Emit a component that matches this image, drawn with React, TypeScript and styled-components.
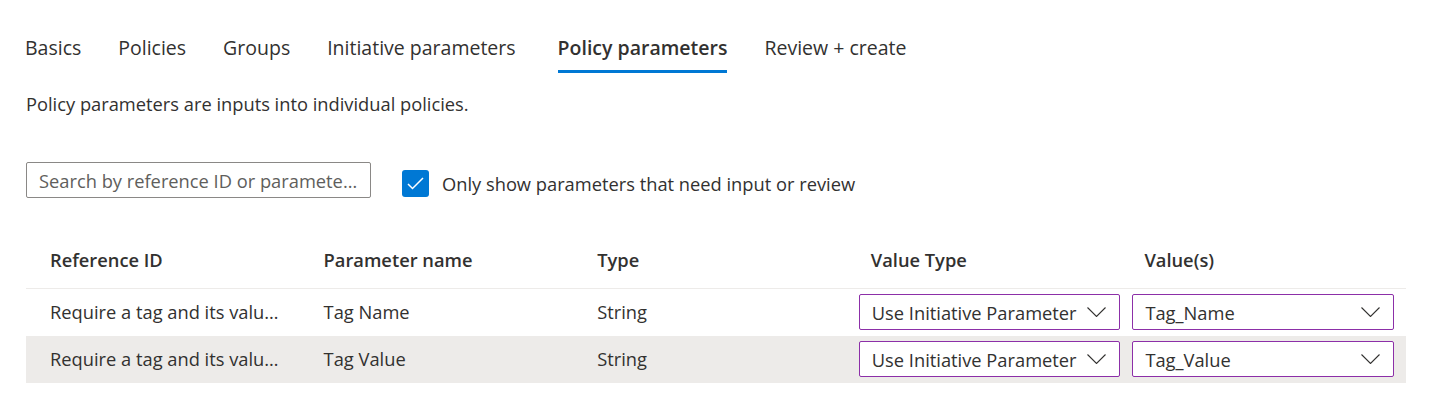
import React from "react";
import styled, { createGlobalStyle } from "styled-components";

const GlobalStyle = createGlobalStyle`
  html, body {
    margin: 0;
    padding: 0;
    background: #ffffff;
  }
  body {
    font-family: "Open Sans", "Noto Sans", "Liberation Sans", sans-serif;
    color: #323130;
    -webkit-font-smoothing: antialiased;
  }
  * { box-sizing: border-box; }
`;

const Page = styled.div`
  padding: 34px 0 0 26px;
  width: 1435px;
  height: 403px;
  overflow: hidden;
`;

const TabBar = styled.nav`
  display: flex;
  gap: 37px;
  margin-left: -1px;
`;

const Tab = styled.div<{ $active?: boolean }>`
  position: relative;
  font-size: 19.5px;
  line-height: 28px;
  padding-bottom: 11px;
  margin-left: ${(p) => (p.$active ? "5px" : "0")};
  font-weight: ${(p) => (p.$active ? 600 : 400)};
  color: #323130;
  white-space: nowrap;
  &::after {
    content: "";
    position: absolute;
    left: 0;
    right: 0;
    bottom: 0;
    height: 3px;
    background: ${(p) => (p.$active ? "#0078d4" : "transparent")};
  }
`;

const Description = styled.p`
  margin: 19px 0 0;
  font-size: 18.3px;
  line-height: 24px;
`;

const Toolbar = styled.div`
  display: flex;
  align-items: flex-start;
  gap: 31px;
  margin-top: 46px;
`;

const SearchBox = styled.input`
  width: 345px;
  height: 36px;
  border: 1px solid #8a8886;
  border-radius: 2px;
  padding: 0 12px;
  font-family: inherit;
  font-size: 18.3px;
  color: #323130;
  outline: none;
  &::placeholder {
    color: #605e5c;
    opacity: 1;
  }
`;

const CheckRow = styled.label`
  display: flex;
  align-items: center;
  gap: 13px;
  margin-top: 8px;
  font-size: 18.3px;
  line-height: 26px;
`;

const CheckBox = styled.span`
  width: 27px;
  height: 27px;
  border-radius: 3px;
  background: #0078d4;
  display: flex;
  align-items: center;
  justify-content: center;
  flex-shrink: 0;
`;

const Table = styled.div`
  margin-top: 38px;
  width: 1380px;
`;

const Row = styled.div<{ $header?: boolean; $shaded?: boolean }>`
  display: grid;
  grid-template-columns: repeat(5, 1fr);
  padding-right: 12px;
  align-items: center;
  height: ${(p) => (p.$header ? "53px" : "47px")};
  padding-bottom: ${(p) => (p.$header ? "5px" : "1px")};
  background: ${(p) => (p.$shaded ? "#edebe9" : "transparent")};
  border-bottom: ${(p) => (p.$header ? "1px solid #edebe9" : "none")};
`;

const Cell = styled.div<{ $header?: boolean }>`
  padding-left: 24px;
  font-size: 18.3px;
  line-height: 24px;
  font-weight: ${(p) => (p.$header ? 600 : 400)};
  white-space: nowrap;
  overflow: hidden;
  text-overflow: ellipsis;
`;

const SelectCell = styled.div`
  padding-left: 12px;
`;

const Select = styled.div`
  display: flex;
  align-items: center;
  justify-content: space-between;
  height: 36px;
  border: 1px solid #8c2fa8;
  border-radius: 2px;
  padding: 0 13px 0 12px;
  background: #ffffff;
  font-size: 18.3px;
  color: #323130;
  white-space: nowrap;
`;

const Chevron = () => (
  <svg width="19" height="10" viewBox="0 0 19 10" fill="none">
    <path d="M0.5 0.5 L9.5 9.5 L18.5 0.5" stroke="#323130" strokeWidth="1.1" />
  </svg>
);

const Check = () => (
  <svg width="17" height="13" viewBox="0 0 17 13" fill="none">
    <path d="M1 7 L5.5 11.5 L16 1" stroke="#ffffff" strokeWidth="1.5" />
  </svg>
);

const tabs = [
  "Basics",
  "Policies",
  "Groups",
  "Initiative parameters",
  "Policy parameters",
  "Review + create",
];

const rows = [
  { ref: "Require a tag and its valu…", name: "Tag Name", type: "String", vt: "Use Initiative Parameter", val: "Tag_Name" },
  { ref: "Require a tag and its valu…", name: "Tag Value", type: "String", vt: "Use Initiative Parameter", val: "Tag_Value" },
];

export default function App() {
  return (
    <Page>
      <GlobalStyle />
      <TabBar>
        {tabs.map((t) => (
          <Tab key={t} $active={t === "Policy parameters"}>
            {t}
          </Tab>
        ))}
      </TabBar>
      <Description>Policy parameters are inputs into individual policies.</Description>
      <Toolbar>
        <SearchBox placeholder="Search by reference ID or paramete…" />
        <CheckRow>
          <CheckBox>
            <Check />
          </CheckBox>
          Only show parameters that need input or review
        </CheckRow>
      </Toolbar>
      <Table>
        <Row $header>
          <Cell $header>Reference ID</Cell>
          <Cell $header>Parameter name</Cell>
          <Cell $header>Type</Cell>
          <Cell $header>Value Type</Cell>
          <Cell $header>Value(s)</Cell>
        </Row>
        {rows.map((r, i) => (
          <Row key={r.name} $shaded={i === 1}>
            <Cell>{r.ref}</Cell>
            <Cell>{r.name}</Cell>
            <Cell>{r.type}</Cell>
            <SelectCell>
              <Select>
                {r.vt}
                <Chevron />
              </Select>
            </SelectCell>
            <SelectCell>
              <Select>
                {r.val}
                <Chevron />
              </Select>
            </SelectCell>
          </Row>
        ))}
      </Table>
    </Page>
  );
}
